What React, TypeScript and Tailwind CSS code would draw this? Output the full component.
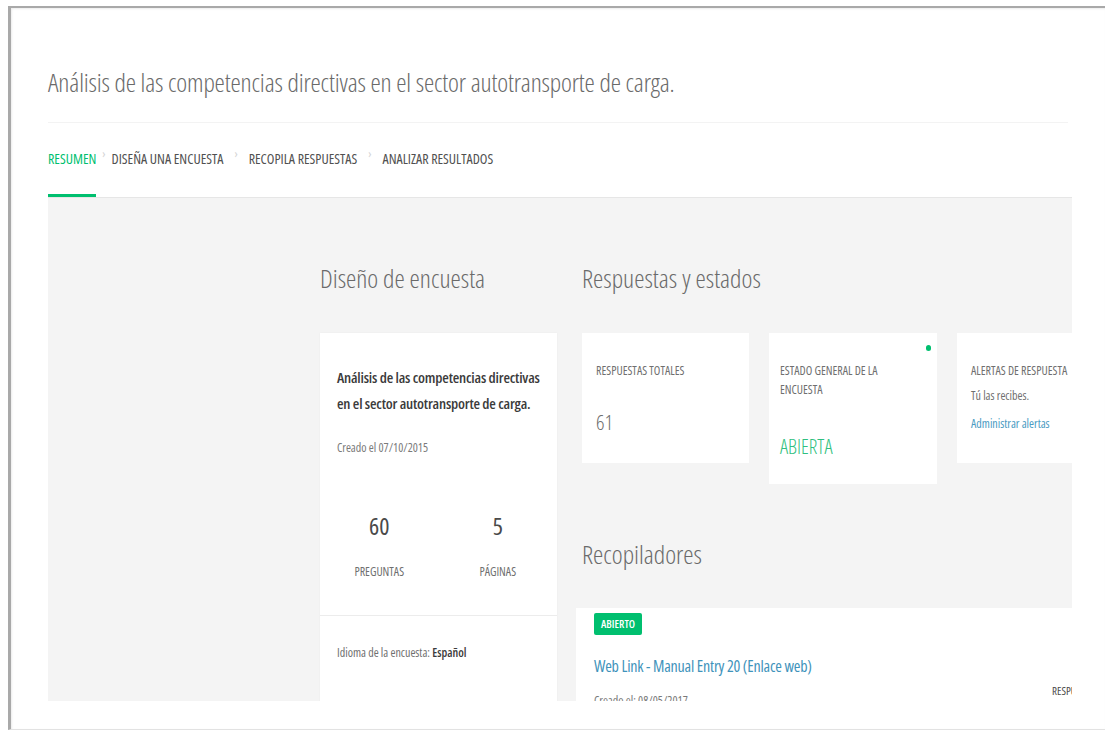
import { Fragment } from "react";

const tabs = [
  { label: "RESUMEN", active: true },
  { label: "DISEÑA UNA ENCUESTA", active: false },
  { label: "RECOPILA RESPUESTAS", active: false },
  { label: "ANALIZAR RESULTADOS", active: false },
];

const SurveySummary = () => {
  return (
    <div className="w-[1105px] h-[731px] overflow-hidden bg-white pl-[8px] pt-[6px] font-['Open_Sans',sans-serif] font-stretch-condensed">
      <div className="h-[724px] border-l-[3px] border-t-2 border-b border-l-[#a9a9a9] border-t-[#a9a9a9] border-b-[#e2e2e2] pl-[37px] pr-[33px] shadow-[inset_1px_1px_2px_rgba(0,0,0,0.08)]">
        {/* encabezado */}
        <div className="pt-[58px] pb-[24px] border-b border-[#f3f3f3] mr-[4px]">
          <h1 className="text-[26px] leading-[32px] font-light tracking-[-0.15px] text-[#6a6a6a]">
            Análisis de las competencias directivas en el sector autotransporte de carga.
          </h1>
        </div>

        {/* pestañas */}
        <div className="mt-[23px] flex items-start border-b border-[#e6e6e6]">
          {tabs.map((tab, i) => (
            <Fragment key={tab.label}>
              {i > 0 && (
                <span
                  className={`text-[12px] leading-[16px] text-[#d4d4d4] ${
                    i === 1 ? "mx-[6px]" : "mx-[11px]"
                  }`}
                >
                  ›
                </span>
              )}
              <div
                className={`pb-[24px] border-b-[3px] ${
                  tab.active ? "border-[#00bf6f]" : "border-transparent"
                }`}
              >
                <span
                  className={`text-[14px] leading-[16px] ${
                    tab.active ? "text-[#00bf6f]" : "text-[#505050]"
                  }`}
                >
                  {tab.label}
                </span>
              </div>
            </Fragment>
          ))}
        </div>

        {/* panel gris */}
        <div className="h-[503px] overflow-hidden bg-[#f4f4f4] pl-[272px] pt-[64px] flex">
          {/* diseño de encuesta */}
          <div className="w-[237px] shrink-0">
            <h2 className="text-[26px] leading-[32px] font-light text-[#6a6a6a]">
              Diseño de encuesta
            </h2>

            <div className="mt-[39px] bg-white h-[400px] shadow-[0_0_2px_rgba(0,0,0,0.04)]">
              <div className="pl-[17px] pr-[8px] pt-[31px]">
                <div className="text-[15px] leading-[26px] font-semibold tracking-[-0.2px] text-[#3b3b3b]">
                  Análisis de las competencias directivas en el sector autotransporte de carga.
                </div>
                <div className="mt-[24px] text-[12px] leading-[16px] text-[#7a7a7a]">
                  Creado el 07/10/2015
                </div>
              </div>

              <div className="mt-[56px] pb-[35px] grid grid-cols-2 border-b border-[#ececec]">
                <div className="flex flex-col items-center">
                  <span className="text-[24px] leading-[28px] text-[#4a4a4a]">60</span>
                  <span className="mt-[24px] text-[12px] leading-[16px] text-[#6f6f6f]">
                    PREGUNTAS
                  </span>
                </div>
                <div className="flex flex-col items-center">
                  <span className="text-[24px] leading-[28px] text-[#4a4a4a]">5</span>
                  <span className="mt-[24px] text-[12px] leading-[16px] text-[#6f6f6f]">
                    PÁGINAS
                  </span>
                </div>
              </div>

              <div className="pl-[17px] pt-[29px] text-[12px] leading-[16px] text-[#6f6f6f]">
                Idioma de la encuesta: <span className="text-[#3b3b3b] font-semibold">Español</span>
              </div>
            </div>
          </div>

          {/* respuestas y recopiladores */}
          <div className="ml-[25px] w-[560px] shrink-0">
            <h2 className="text-[26px] leading-[32px] font-light text-[#6a6a6a]">
              Respuestas y estados
            </h2>

            <div className="mt-[39px] flex items-start gap-[20px]">
              <div className="w-[167px] h-[130px] shrink-0 bg-white px-[14px] pt-[28px]">
                <div className="text-[12px] leading-[19px] text-[#6f6f6f]">
                  RESPUESTAS TOTALES
                </div>
                <div className="mt-[29px] text-[21px] leading-[26px] font-light text-[#6f6f6f]">
                  61
                </div>
              </div>

              <div className="relative w-[168px] h-[151px] shrink-0 bg-white pl-[11px] pr-[40px] pt-[28px]">
                <span className="absolute top-[12px] right-[6px] w-[5px] h-[6px] rounded-full bg-[#00bf6f]" />
                <div className="text-[12px] leading-[19px] text-[#6f6f6f]">
                  ESTADO GENERAL DE LA ENCUESTA
                </div>
                <div className="mt-[36px] text-[20px] leading-[24px] font-light text-[#2fbf80]">
                  ABIERTA
                </div>
              </div>

              <div className="w-[168px] h-[130px] shrink-0 bg-white px-[14px] pt-[28px]">
                <div className="text-[12px] leading-[19px] text-[#6f6f6f] whitespace-nowrap">
                  ALERTAS DE RESPUESTA
                </div>
                <div className="mt-[2px] text-[12px] leading-[28px] text-[#6f6f6f]">
                  Tú las recibes.
                </div>
                <div className="text-[12px] leading-[28px] text-[#4a9bc2]">
                  Administrar alertas
                </div>
              </div>
            </div>

            <h2 className="mt-[54px] text-[26px] leading-[32px] font-light text-[#6a6a6a]">
              Recopiladores
            </h2>

            <div className="mt-[38px] -ml-[6px] bg-white h-[120px] grid grid-cols-[476px_1fr]">
              <div className="pl-[18px] pt-[2px]">
                <span className="inline-block rounded-[2px] bg-[#00bf6f] px-[7px] text-[11px] leading-[22px] font-semibold text-white">
                  ABIERTO
                </span>
                <div className="mt-[20px] text-[16px] leading-[22px] tracking-[-0.2px] text-[#3f93bb]">
                  Web Link - Manual Entry 20 (Enlace web)
                </div>
                <div className="mt-[16px] text-[12px] leading-[16px] text-[#7a7a7a]">
                  Creado el: 08/05/2017
                </div>
              </div>
              <div className="pt-[76px] text-[11px] leading-[14px] text-[#4a4a4a]">
                RESPUESTAS
              </div>
            </div>
          </div>
        </div>
      </div>
    </div>
  );
};

export default SurveySummary;
